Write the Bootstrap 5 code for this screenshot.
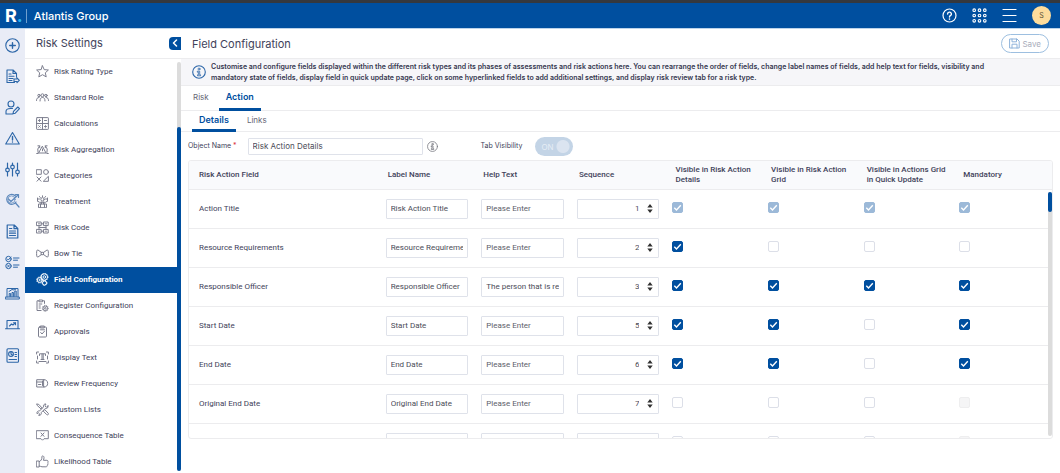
<!DOCTYPE html>
<html lang="en">
<head>
<meta charset="utf-8">
<meta name="viewport" content="width=device-width, initial-scale=1">
<title>Field Configuration</title>
<link rel="stylesheet" href="https://cdn.jsdelivr.net/npm/bootstrap@5.3.0/dist/css/bootstrap.min.css">
<style>
  :root { --brand: #004f9f; --ink: #41425a; --line: #ececee; --field: #dfe2ea; }
  body { font-family: Roboto, "Liberation Sans", sans-serif; font-size: 8px; line-height: 10px; color: var(--ink); background: #fff; }
  .ui { font-family: Inter, "Liberation Sans", sans-serif; }
  svg { fill: none; stroke: currentColor; stroke-linecap: round; stroke-linejoin: round; flex: none; }
  a { color: inherit; text-decoration: none; }
  .app-shell { height: 100vh; overflow: hidden; }

  .topbar { height: 29px; background: var(--brand); border-top: 3px solid #35383d; border-bottom: 1px solid #bcd3ea; padding-left: 5px; padding-right: 9px; color: #fff; }
  .brand-r { font-size: 18px; line-height: 24px; font-weight: 700; }
  .brand-r span { color: #27b4f2; }
  .brand-name { font-size: 11px; line-height: 14px; font-weight: 500; border-left: 1px solid #6f9fce; padding-left: 7px; margin-left: 3px; }
  .topbar button, .rail button, .fold { background: none; border: 0; padding: 0; color: inherit; display: flex; }
  .topbar .avatar { width: 19px; height: 19px; border-radius: 50%; background: #fddc9c; color: #5b5136; font-size: 7px; align-items: center; justify-content: center; }

  .rail { width: 25px; background: #e9ecf6; color: #2c66a8; padding-top: 9px; gap: 16px; }
  .side { width: 156px; }
  .pane-title { font-size: 11px; line-height: 14px; font-weight: 400; height: 30px; border-bottom: 1px solid var(--line); margin: 0; }
  .side .pane-title { padding-left: 11px; }
  .fold.fold { width: 12px; height: 13px; background: var(--brand); color: #fff; border-radius: 4px 0 0 4px; align-items: center; justify-content: center; }
  .side-list a { display: flex; align-items: center; height: 26px; padding-left: 11px; gap: 5px; margin-right: 4px; }
  .side-list a svg { stroke-width: 1; color: #7c7e8e; }
  .side-list a.current { background: var(--brand); color: #fff; font-weight: 700; }
  .side-list a.current svg { color: #fff; }
  .cog { stroke-linecap: butt; }
  .track { right: 0; top: 3px; bottom: 2px; width: 4px; border-radius: 2px; background: #dcdcdc; }
  .track i { position: absolute; left: 0; right: 0; border-radius: 2px; background: var(--brand); }
  .side .track i { top: 16%; bottom: 0; }

  .main-head { padding: 0 11px; }
  .save { height: 19px; border: 1px solid #9dbfe0; border-radius: 10px; background: #fff; color: #a9adbb; padding: 0 7px; gap: 2px; font-size: 8px; }
  .save svg { color: #8fb3da; }
  .note { background: #f6f6f9; border-bottom: 1px solid var(--line); height: 27px; padding: 0 11px; gap: 5px; font-size: 7px; line-height: 11px; font-weight: 600; color: #35364f; }
  .note svg { color: #2c66a8; }
  .note p { max-width: 788px; }
  .tabs-row { border-bottom: 1px solid var(--line); padding-left: 11px; gap: 10px; font-size: 8px; }
  .tabs-row .nav-link { padding: 0 7px; color: #666775; border-bottom: 3px solid transparent; display: flex; align-items: center; line-height: 12px; }
  .tabs-row .nav-link:first-child { padding-left: 1px; padding-right: 0; }
  .tabs-row .nav-link.active { color: var(--brand); font-size: 9px; font-weight: 600; border-color: var(--brand); }
  .tabs-row .nav-link.active:first-child { padding-left: 7px; padding-right: 7px; }
  .tabs-one { height: 25px; } .tabs-one .nav-link { height: 25px; }
  .tabs-two { height: 21px; gap: 4px; } .tabs-two .nav-link { height: 21px; }

  .form-line { height: 28px; padding-left: 7px; }
  .form-line label { font-size: 7px; }
  .hint { color: #77787f; }
  .cell-input { display: block; width: 100%; height: 20px; border: 1px solid var(--field); border-radius: 1px; padding: 0 4px; color: #4b4c58; background: #fff; outline: 0; font-size: 8px; }
  .cell-input::placeholder { color: #5d5e6a; opacity: 1; }
  .object-name { width: 175px; height: 17px; margin-left: 11px; }
  .toggle { width: 38px; height: 19px; margin: 0; border-radius: 10px; appearance: none; background: radial-gradient(circle at 28px 50%, #dbe4f0 6px, #c3d4e6 7px); display: block; }
  .toggle-text { left: 6px; top: 5px; color: #e6edf5; font-size: 8px; pointer-events: none; }

  .grid-panel { margin: 0 7px 34px; border: 1px solid var(--line); border-radius: 3px; overflow: hidden; }
  .grid-table { table-layout: fixed; width: 100%; }
  .grid-table th { height: 28px; background: #f9fafc; font-weight: 500; padding: 0 4px 0 7px; width: 11.08%; vertical-align: middle; border-bottom: 1px solid var(--line); }
  .grid-table th:nth-child(n+5) { padding-left: 8px; }
  .grid-table th:first-child { width: auto; padding-left: 10px; }
  .grid-table th:last-child { width: 11.32%; padding-left: 9px; }
  .grid-table td { height: 39px; padding: 0 8px 0 5px; vertical-align: middle; border-bottom: 1px solid var(--line); }
  .grid-table td:first-child { padding-left: 10px; }
  .grid-table td:last-child { padding-right: 0; }
  .sequence { padding-right: 19px; text-align: right; appearance: textfield; background: #fff url("data:image/svg+xml,%3Csvg xmlns='http://www.w3.org/2000/svg' viewBox='0 0 6 10'%3E%3Cpath d='M3 0l3 4H0zM3 10l3-4H0z' fill='%23333'/%3E%3C/svg%3E") no-repeat right 5px center / 6px 9px; }
  .sequence::-webkit-inner-spin-button { appearance: none; }
  .tick { appearance: none; display: block; width: 11px; height: 11px; margin: 0 0 2px; border: 1px solid #dcdfe8; border-radius: 2px; background: #fff center / 11px 11px no-repeat; }
  .tick:checked { border-color: var(--brand); background-color: var(--brand); background-image: url("data:image/svg+xml,%3Csvg xmlns='http://www.w3.org/2000/svg' viewBox='0 0 11 11'%3E%3Cpath d='M2.3 5.7l2.2 2.2 4.3-4.6' fill='none' stroke='%23fff' stroke-width='1.4'/%3E%3C/svg%3E"); }
  .tick:checked:disabled { border-color: #9cb9d8; background-color: #9cb9d8; }
  .tick:disabled:not(:checked) { background-color: #f5f5f6; border-color: #eeeeef; }
  .grid-panel .track { top: 31px; }
  .grid-panel .track i { top: 0; height: 20px; }
</style>
</head>
<body>
<div class="app-shell d-flex flex-column">
  <header class="topbar ui d-flex align-items-center flex-shrink-0">
    <div class="brand-r">R<span>.</span></div>
    <div class="brand-name">Atlantis Group</div>
    <div class="d-flex align-items-center ms-auto" style="gap:15px">
      <button aria-label="Help"><svg width="15" height="15" viewBox="0 0 15 15" stroke-width="1.2"><circle cx="7.500" cy="7.500" r="6.500"/><path d="M5.600 6a1.900 1.900 0 1 1 2.800 1.700c-.7.4-.9.7-.9 1.400" stroke-width="1.400"/><path d="M7.500 11v.1" stroke-width="1.600"/></svg></button>
      <button aria-label="Apps"><svg width="15" height="15" viewBox="0 0 15 15" stroke-width="1.100"><circle cx="2.200" cy="2.200" r="1.300"/><circle cx="7.500" cy="2.200" r="1.300"/><circle cx="12.800" cy="2.200" r="1.300"/><circle cx="2.200" cy="7.500" r="1.300"/><circle cx="7.500" cy="7.500" r="1.300"/><circle cx="12.800" cy="7.500" r="1.300"/><circle cx="2.200" cy="12.800" r="1.300"/><circle cx="7.500" cy="12.800" r="1.300"/><circle cx="12.800" cy="12.800" r="1.300"/></svg></button>
      <button aria-label="Menu"><svg width="15" height="15" viewBox="0 0 15 15" stroke-width="1.200"><path d="M1 1.500h13M1 7.500h13M1 13.500h13"/></svg></button>
      <button class="avatar" aria-label="Profile">S</button>
    </div>
  </header>

  <div class="d-flex flex-fill" style="min-height:0">
    <nav class="rail d-flex flex-column align-items-center flex-shrink-0" aria-label="Modules">
      <button aria-label="Add"><svg width="15" height="15" viewBox="0 0 15 15" stroke-width="1.100"><circle cx="7.500" cy="7.500" r="6.700"/><path d="M7.500 4.700v5.600M4.700 7.500h5.600" stroke-width="1.400"/></svg></button>
      <button aria-label="Documents"><svg width="15" height="15" viewBox="0 0 15 15" stroke-width="1.100"><path d="M9.500 13.500H2V1h6l3.500 3.500V8M8 1v3.500h3.500M4 5h2M4 7.300h5M4 9.500h4M4 11.500h3M9 10h3V8.800l2.300 2.500-2.300 2.400v-1.200H9z"/></svg></button>
      <button aria-label="Assignments"><svg width="15" height="15" viewBox="0 0 15 15" stroke-width="1.100"><circle cx="6" cy="4" r="3"/><path d="M7.500 14H1v-2.500c0-2 2-3 4.500-3h2M8 13.800l.5-2.500L12.800 7l1.700 1.700-4.200 4.500z"/></svg></button>
      <button aria-label="Risks"><svg width="15" height="15" viewBox="0 0 15 15" stroke-width="1.100"><path d="M7.500 1.500L14.300 13H.7z"/><path d="M7.500 5.500V9M7.500 11v.1" stroke-width="1.400"/></svg></button>
      <button aria-label="Controls"><svg width="15" height="15" viewBox="0 0 15 15" stroke-width="1.200"><path d="M2.500 1v5M2.500 10v4M7.500 1v2M7.500 7v7M12.500 1v6.500M12.500 12v2"/><circle cx="2.500" cy="8" r="1.800"/><circle cx="7.500" cy="5" r="1.800"/><circle cx="12.500" cy="10" r="1.800"/></svg></button>
      <button aria-label="Review"><svg width="15" height="15" viewBox="0 0 15 15" stroke-width="1.200" opacity=".75"><path d="M10.500 3A5 5 0 1 0 11 9"/><path d="M3.500 6l2.500 2.500L13 2M10.500 1.500H13.500V4.500M10.500 10l3.500 4"/><circle cx="6.500" cy="6.500" r="3.600" stroke-width=".7"/></svg></button>
      <button aria-label="Register"><svg width="15" height="15" viewBox="0 0 15 15" stroke-width="1.200"><path d="M2.200 1h7l3.600 3.500V14H2.200zM9 1v3.700h3.700M4.500 4.500h2.300M4.500 7h6M4.500 9.200h6M4.500 11.500h6"/></svg></button>
      <button aria-label="Checklists"><svg width="15" height="15" viewBox="0 0 15 15" stroke-width="1"><circle cx="3.500" cy="4" r="2.700"/><circle cx="3.500" cy="11" r="2.700"/><path d="M2.300 4l1 1L6 2M2.600 10.200l1.800 1.700m0-1.700l-1.800 1.700M8.500 3H14M8.500 5.200h4M8.500 10H14M8.500 12.200h4"/></svg></button>
      <button aria-label="Analytics"><svg width="15" height="15" viewBox="0 0 15 15" stroke-width="1"><path d="M2 11V2.500h11V11M.7 11h13.600v2H.7zM4.200 10.500v-3h1.400v3M7 10.500v-4h1.400v4M9.800 10.500V5h1.400v5.500M4 5.500l3-2 2 .5 2-1"/></svg></button>
      <button aria-label="Dashboard"><svg width="15" height="15" viewBox="0 0 15 15" stroke-width="1.100"><path d="M2 11.500V3.500h11v8M.5 11.800h14M4.500 9l2-2 1.500 1L10.500 5.700M8.500 5.700h2v2"/></svg></button>
      <button aria-label="Reports"><svg width="15" height="15" viewBox="0 0 15 15" stroke-width="1.100"><rect x="2" y=".8" width="11.500" height="13.400" rx="1"/><circle cx="6" cy="6" r="2.400"/><path d="M6 3.600V6l1.800 1.500M10 4.500h1.500M10 6.500h1.500M10 8.500h1.500M4 11.500h7.500"/></svg></button>
    </nav>

    <aside class="side d-flex flex-column flex-shrink-0">
      <div class="pane-title ui d-flex align-items-center justify-content-between"><span>Risk Settings</span>
        <button class="fold" aria-label="Collapse"><svg width="6" height="8" viewBox="0 0 6 8" stroke-width="1.500"><path d="M4.500 1L1.500 4l3 3"/></svg></button></div>
      <div class="position-relative flex-fill overflow-hidden">
        <nav class="side-list" aria-label="Risk settings">
          <a href="#"><svg width="13" height="13" viewBox="0 0 13 13"><path d="M6.500.8l1.700 3.800 4.200.4-3.100 2.800.9 4.100-3.700-2.200-3.700 2.200.9-4.100L.6 5l4.200-.4z"/></svg>Risk Rating Type</a>
          <a href="#"><svg width="13" height="13" viewBox="0 0 13 13"><circle cx="6.500" cy="4.300" r="1.500"/><circle cx="3" cy="4.500" r="1.200"/><circle cx="10" cy="4.500" r="1.200"/><path d="M4 10c0-2.500 1-3.500 2.500-3.500S9 7.500 9 10M.5 9.500C.5 7.500 1.300 6.500 3 6.500M12.500 9.500c0-2-.8-3-2.500-3"/></svg>Standard Role</a>
          <a href="#"><svg width="13" height="13" viewBox="0 0 13 13"><rect x=".6" y=".6" width="11.800" height="11.800" rx=".6"/><path d="M6.500.6v11.800M.6 6.500h11.800M2.500 3.500h2M3.500 2.500v2M8.500 3.500h2M2.700 8.700l1.600 1.600m0-1.600l-1.600 1.600M8.500 9.500h2M9.500 8.300v.1M9.500 10.700v.1"/></svg>Calculations</a>
          <a href="#"><svg width="13" height="13" viewBox="0 0 13 13"><path d="M6.500 3.500l3.500 6.500H3zM6.500 6v1.800M2 9.500A6 6 0 0 1 3.500 3M3.700 4.700V2.800H1.900M11 9.500A6 6 0 0 0 9.500 3M9.300 4.700V2.800h1.800M.7 10.500h1.500M10.800 10.500h1.500"/></svg>Risk Aggregation</a>
          <a href="#"><svg width="13" height="13" viewBox="0 0 13 13"><rect x=".7" y=".7" width="4.600" height="4.600"/><circle cx="10" cy="3" r="2.400"/><path d="M1 8l4 4.200M5 8l-4 4.200M12.400 7.700v4.600H7.700z"/></svg>Categories</a>
          <a href="#"><svg width="13" height="13" viewBox="0 0 13 13"><circle cx="6.500" cy="4.300" r="1.700"/><path d="M6.500.8v1M3.500 1.500l.8 1M9.500 1.500l-.8 1M2 4h1.500M9.500 4H11M1.500 6l2 1.300h6l2-1.300M2.500 12.300V9h8v3.300zM4.500 9v3.300M8.500 9v3.300M5.500 7v2M7.500 7v2M1.500 3v3M11.500 3v3"/></svg>Treatment</a>
          <a href="#"><svg width="13" height="13" viewBox="0 0 13 13"><path d="M.8 1h4.400v3.600H.8zM7.800 1h4.400v3.600H7.800zM.8 8.400h4.400V12H.8zM7.800 8.400h4.400V12H7.800zM3 4.600v3.800M10 4.600v3.800M5.200 2.800h2.600M5.200 10.200h2.600M3 6.500h7M2.500 2.800h1M9.500 2.800h1M2.500 10.200h1M9.500 10.200h1"/></svg>Risk Code</a>
          <a href="#"><svg width="13" height="13" viewBox="0 0 13 13"><path d="M5.500 5.500L2 3C.8 2.700.6 4 .6 6.500S.8 10.300 2 10l3.500-2.500M7.500 5.500L11 3c1.200-.3 1.400 1 1.400 3.500s-.2 3.800-1.400 3.500L7.500 7.500M5.500 5.300h2v2.400h-2z"/></svg>Bow Tie</a>
          <a href="#" class="current" aria-current="page"><svg class="cog" width="13" height="13" viewBox="0 0 13 13"><circle cx="8.300" cy="4" r="3.200"/><circle cx="8.300" cy="4" r="3.700" stroke-dasharray="1 1"/><circle cx="8.300" cy="4" r="1.300"/><circle cx="3.600" cy="7" r="2.400"/><circle cx="3.600" cy="7" r="3" stroke-dasharray=".9 .9"/><circle cx="3.600" cy="7" r=".7"/><circle cx="8.500" cy="10" r="2"/><circle cx="8.500" cy="10" r="2.500" stroke-dasharray=".8 .8"/></svg>Field Configuration</a>
          <a href="#"><svg class="cog" width="13" height="13" viewBox="0 0 13 13"><path d="M5.500 11.500H1V1.800h2M6.500 1.800h2v3M3 1h3.500v1.800H3zM2.700 5h3.500M2.700 7h2M2.700 9h2"/><circle cx="9.300" cy="9.300" r="2.300"/><circle cx="9.300" cy="9.300" r="3" stroke-dasharray=".9 .9"/><circle cx="9.300" cy="9.300" r=".8"/></svg>Register Configuration</a>
          <a href="#"><svg width="13" height="13" viewBox="0 0 13 13"><rect x="2.500" y="2" width="8" height="10" rx="1"/><path d="M4.700 1h3.600v2H4.700zM4.700 7.500L6 9l2.500-2.800M4.500 4.800h4"/></svg>Approvals</a>
          <a href="#"><svg width="13" height="13" viewBox="0 0 13 13"><path d="M.6 3V1h2M10.400 1h2v2M.6 10v2h2M10.400 12h2v-2M3.500 4.500V2.800h6v1.700M6 3v5.500M7.200 3v5.500M5 8.500h3M3 10.500h7M1.500 5v3M11.500 5v3"/></svg>Display Text</a>
          <a href="#"><svg width="13" height="13" viewBox="0 0 13 13"><path d="M8 10H.7V2.700H8M.7 5H6M2.500 7.500h2.300M8 2.700a3.600 3.600 0 0 1 0 7.300zM6.500 4v4.500"/></svg>Review Frequency</a>
          <a href="#"><svg width="13" height="13" viewBox="0 0 13 13"><path d="M1 1l1.800.4 3.400 3.700-1 1L1.500 2.700zM7.500 7.800l1.200-1.200 3.500 3.600c.9 1-.4 2.400-1.400 1.500zM12 3l-1.700 1.200-1.400-1.400L10 1C8.200.7 7 2.200 7.500 3.900L3.500 8C1.800 7.600.5 9 1 10.700l1.300-1 1.400 1.200-1 1.500c1.800.3 3-1.200 2.600-2.900l4-4.100C11 5.900 12.500 4.700 12 3z"/></svg>Custom Lists</a>
          <a href="#"><svg width="13" height="13" viewBox="0 0 13 13"><path d="M.7 1.700h11.600v8H8l-1.500 1.500L5 9.700H.7zM5 4l3 3.300M8 4L5 7.300"/></svg>Consequence Table</a>
          <a href="#"><svg width="13" height="13" viewBox="0 0 13 13"><path d="M.7 6h2.500v6H.7zM3.200 6.700C5 6 6 4.500 6 1.500c0-1 1.800-1 2 1 .1 1-.3 2-.6 2.800h3.500c1.200 0 1.400 1.400.8 1.900.7.500.5 1.500-.1 1.800.4.600.1 1.400-.5 1.600.1.900-.5 1.200-1.200 1.200H6c-1 0-1.800-.8-2.800-.8"/></svg>Likelihood Table</a>
        </nav>
        <div class="track position-absolute"><i></i></div>
      </div>
    </aside>

    <main class="flex-fill d-flex flex-column" style="min-width:0">
      <div class="main-head pane-title ui d-flex align-items-center justify-content-between flex-shrink-0">
        <h1 class="pane-title border-0 d-flex align-items-center">Field Configuration</h1>
        <button class="save d-flex align-items-center" disabled><svg width="11" height="11" viewBox="0 0 11 11" stroke-width="1"><path d="M1 1h7l2.200 2.200V10H1zM3 1v2.800h4.500V1M3 10V6.200h5V10"/></svg>Save</button>
      </div>
      <div class="note ui d-flex align-items-center flex-shrink-0">
        <svg width="14" height="14" viewBox="0 0 14 14" stroke-width="1.100"><circle cx="7" cy="7" r="6.300"/><circle cx="7" cy="4" r="1" stroke-width=".8"/><path d="M5.700 6.200h2v3.600h.9v1H5.500v-1h.9V7.200h-.7z" stroke-width=".8"/></svg>
        <p class="mb-0">Customise and configure fields displayed within the different risk types and its phases of assessments and risk actions here. You can rearrange the order of fields, change label names of fields, add help text for fields, visibility and mandatory state of fields, display field in quick update page, click on some hyperlinked fields to add additional settings, and display risk review tab for a risk type.</p>
      </div>
      <nav class="tabs-row tabs-one ui d-flex flex-shrink-0" aria-label="Object"><a class="nav-link" href="#">Risk</a><a class="nav-link active" href="#">Action</a></nav>
      <nav class="tabs-row tabs-two ui d-flex flex-shrink-0" aria-label="Section"><a class="nav-link active" href="#">Details</a><a class="nav-link" href="#">Links</a></nav>
      <div class="form-line ui d-flex align-items-center flex-shrink-0">
        <label for="objectName">Object Name <span class="text-danger">*</span></label>
        <input id="objectName" class="cell-input object-name" value="Risk Action Details">
        <svg class="hint ms-1" width="11" height="11" viewBox="0 0 14 14" stroke-width="1"><circle cx="7" cy="7" r="6.300"/><circle cx="7" cy="4" r="1"/><path d="M5.700 6.200h2v3.600h.9v1H5.500v-1h.9V7.200h-.7z"/></svg>
        <label for="tabVisibility" style="margin-left:43px">Tab Visibility</label>
        <div class="position-relative" style="margin-left:13px"><input id="tabVisibility" type="checkbox" role="switch" class="toggle" checked disabled><span class="toggle-text position-absolute">ON</span></div>
      </div>
      <div class="grid-panel position-relative flex-fill">
        <table class="grid-table">
          <thead><tr><th>Risk Action Field</th><th>Label Name</th><th>Help Text</th><th>Sequence</th><th>Visible in Risk Action Details</th><th>Visible in Risk Action Grid</th><th>Visible in Actions Grid in Quick Update</th><th>Mandatory</th></tr></thead>
          <tbody id="fieldRows"></tbody>
        </table>
        <div class="track position-absolute"><i></i></div>
      </div>
    </main>
  </div>
</div>
<script src="https://cdn.jsdelivr.net/npm/bootstrap@5.3.0/dist/js/bootstrap.bundle.min.js"></script>
<script>
  // Field, label, help text, sequence, then flags per column:
  // 1 ticked, 0 clear, L ticked and locked, X clear and locked
  const fields = [
    ['Action Title', 'Risk Action Title', '', 1, 'LLLL'],
    ['Resource Requirements', 'Resource Requirements', '', 2, '1000'],
    ['Responsible Officer', 'Responsible Officer', 'The person that is responsible', 3, '1111'],
    ['Start Date', 'Start Date', '', 5, '1101'],
    ['End Date', 'End Date', '', 6, '1101'],
    ['Original End Date', 'Original End Date', '', 7, '000X'],
    ['', '', '', 8, '000X']
  ];
  const columns = ['Visible in details', 'Visible in grid', 'Visible in quick update', 'Mandatory'];
  document.getElementById('fieldRows').innerHTML = fields.map(([name, label, help, seq, flags]) => `<tr>
    <td>${name}</td>
    <td><input class="cell-input" aria-label="Label name" value="${label}"></td>
    <td><input class="cell-input" aria-label="Help text" placeholder="Please Enter" value="${help}"></td>
    <td><input class="cell-input sequence" type="number" aria-label="Sequence" value="${seq}"></td>
    ${[...flags].map((f, i) => `<td><input class="tick" type="checkbox" aria-label="${columns[i]}" ${'1L'.includes(f) ? 'checked' : ''} ${'LX'.includes(f) ? 'disabled' : ''}></td>`).join('')}
  </tr>`).join('');
</script>
</body>
</html>
